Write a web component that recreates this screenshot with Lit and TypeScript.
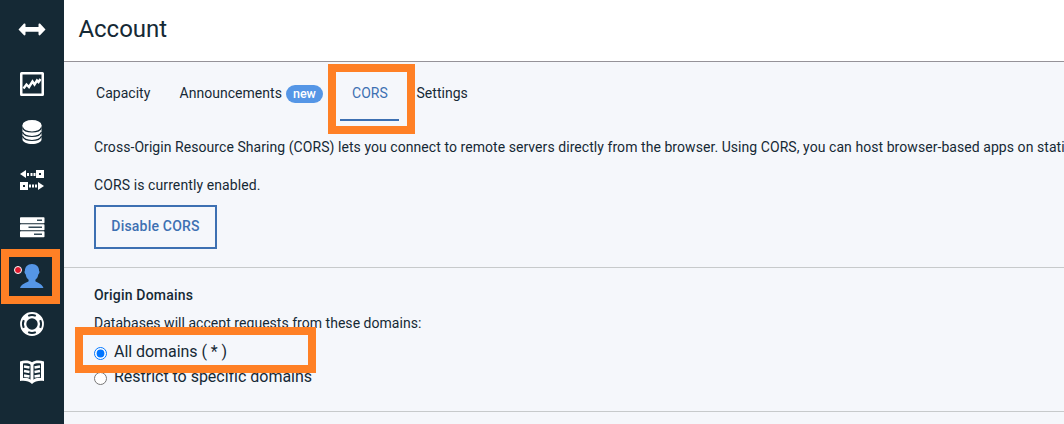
import { LitElement, html, css, svg } from "lit";
import { customElement } from "lit/decorators.js";

const socket = (x: number, y: number) => svg`<path fill-rule="evenodd" d="M${x} ${y}h8v8h-8zM${x + 3} ${y + 3}v2h2v-2z"/>`;
const icons = {
  arrows: svg`<path d="M-1.500 12.400l5.500-5.900q1.500-.5 1.500 1v2.500h13V7.500q0-1.500 1.500-1l5.500 5.900-5.500 5.900q-1.500.5-1.500-1v-2.500h-13v2.500q0 1.500-1.500 1z"/>`,
  chart: svg`<path fill-rule="evenodd" d="M1.500 0h21a1.500 1.500 0 0 1 1.500 1.500v21a1.500 1.500 0 0 1-1.500 1.500h-21A1.500 1.500 0 0 1 0 22.500v-21A1.500 1.500 0 0 1 1.500 0zM2.500 2.500v19h19v-19z"/><path d="M3.500 16.500l3-4 2.500 2.500 3.500-5.500 2 3 2.500-4 1.500 1.500 2-3" fill="none" stroke="#fff" stroke-width="2.400"/>`,
  database: svg`<path d="M2.500 5v14.500C2.500 22 7 24 12 24s9.500-2 9.500-4.500V5z"/><ellipse cx="12" cy="5" rx="9.500" ry="5"/><path d="M2.500 7.500c1 3 5 4.500 9.500 4.500s8.500-1.500 9.500-4.500M2.500 12c1 3 5 4.500 9.500 4.500s8.500-1.500 9.500-4.500M2.500 16c1 3 5 4.500 9.500 4.500s8.500-1.500 9.500-4.500" fill="none" stroke="#152935" stroke-width="1.200"/>`,
  replicate: svg`<path d="M0 6l6-4v8zM7 5h2v3H7zM10.500 5h2v3h-2zM13.500 5h2v3h-2zM24 18l-6-4v8zM9 16.500h2v3H9zM12 16.500h2v3h-2zM15 16.500h2v3h-2z"/>${socket(16, 2)}${socket(0, 14)}`,
  servers: svg`<g transform="translate(0 -.7)"><rect y="2" width="24.500" height="6" rx=".8"/><rect y="9" width="24.500" height="6" rx=".8"/><rect y="16" width="24.500" height="6" rx=".8"/><path d="M17 4.200h5v1.600h-5zM8.500 11.200H22v1.600H8.500zM14 18.200h8v1.600h-8z" fill="#344a57"/></g>`,
  user: svg`<path fill="#5596e6" d="M12 0C7.500 0 4.800 3 4.900 7c-.8.500-.4 2.500.8 3.500.4 2.600 1.400 4.200 2.900 5.300v1.500c-1.500 1.500-7.100 2-8.600 6.700h23.500c-1.500-4.700-6.600-5.200-8.100-6.700v-1.500c1.500-1.100 2.500-2.700 2.900-5.300 1.200-1 1.600-3 .8-3.500C19.200 3 16.500 0 12 0z"/>`,
  help: svg`<circle cx="12" cy="12" r="8.800" fill="none" stroke="#fff" stroke-width="6.200"/><g fill="none" stroke="#152935" stroke-width="2"><path d="M8.200 3.800a9 9 0 0 1 7.600 0M8.200 20.200a9 9 0 0 0 7.600 0M3.800 8.200a9 9 0 0 0 0 7.600M20.200 8.200a9 9 0 0 1 0 7.600"/></g>`,
  book: svg`<path d="M0 1.500C4 0 9 0 12 2.200 15 0 20 0 24 1.500V21c-4-.7-9-.4-12 3-3-3.400-8-3.700-12-3z"/><path fill="#152935" d="M3 3.500c3-.6 6-.3 7.500 1.200v15C8.500 18 6 17.600 3 18zM21 3.500c-3-.6-6-.3-7.500 1.200v15c2-1.700 4.500-2.100 7.500-1.700z"/><path fill="none" stroke="#fff" stroke-width="2.400" d="M4 6.500l5.500 1M4 11l5.500 1M4 15.500l5.500 1M20 6.500l-5.500 1M20 11l-5.500 1M20 15.500l-5.500 1"/>`,
};

@customElement("side-nav")
class SideNav extends LitElement {
  static styles = css`
    :host { display: flex; flex-direction: column; align-items: center; width: 64px; height: 424px; background: #152935; flex: none; box-sizing: border-box; padding-top: 17px; }
    .item { width: 64px; height: 24px; display: flex; justify-content: center; margin-bottom: 24px; flex: none; position: relative; }
    .first { margin-bottom: 31px; }
    svg { width: 24px; height: 24px; fill: #fff; display: block; overflow: visible; }
    .mark { position: absolute; left: 1px; top: -15px; width: 59px; height: 55px; box-sizing: border-box; border: 8px solid #ff8025; }
    .dot { position: absolute; left: 14px; top: 2px; width: 8px; height: 8px; box-sizing: border-box; border: 1px solid #fff; border-radius: 50%; background: #e0182d; }
  `;
  render() {
    return Object.entries(icons).map(([name, shape]) => html`
      <div class="item ${name === "arrows" ? "first" : ""}">
        <svg viewBox="0 0 24 24">${shape}</svg>
        ${name === "user" ? html`<i class="dot"></i><i class="mark"></i>` : ""}
      </div>`);
  }
}

@customElement("app-root")
class AppRoot extends LitElement {
  static styles = css`
    :host { display: flex; width: 1064px; height: 424px; overflow: hidden; background: #f5f7fb; color: #152935; font: 14px/20px Roboto, "Liberation Sans", sans-serif; }
    main { flex: 1; min-width: 0; overflow: hidden; }
    header { height: 62px; box-sizing: border-box; border-bottom: 1px solid #959298; background: #fff; padding: 13px 0 0 14.500px; }
    h1 { margin: 0; font-size: 24px; line-height: 32px; font-weight: 400; letter-spacing: -.05px; }
    .tabs { display: flex; height: 59px; padding-left: 32px; }
    .tab { display: flex; padding-top: 21px; box-sizing: border-box; white-space: nowrap; letter-spacing: .03px; }
    .capacity { width: 83.500px; }
    .news { width: 160.500px; }
    .cors { width: 59px; padding-left: 12px; color: #3d70b2; border-bottom: 2px solid #3d70b2; position: relative; }
    .settings { margin-left: 17.500px; }
    .badge { margin: 2px 0 0 4px; width: 37px; height: 18px; line-height: 17px; border-radius: 9px; background: #5596e6; color: #fff; font-size: 12.500px; font-weight: 500; text-align: center; }
    .mark { position: absolute; box-sizing: border-box; border: 8px solid #ff8025; }
    .markTab { left: -12px; top: 2px; width: 87px; height: 70px; }
    .status { height: 147px; box-sizing: border-box; padding: 16px 0 0 30px; border-bottom: 1px solid #c7cacb; }
    p { margin: 0; white-space: nowrap; }
    .intro { letter-spacing: .06px; margin-bottom: 18px; }
    .enabled { letter-spacing: .1px; }
    button { margin-top: 10px; width: 123px; height: 44px; padding: 0 0 2px; background: transparent; border: 2px solid #3d70b2; color: #3d70b2; font: 500 14px/20px Roboto, sans-serif; letter-spacing: .2px; display: block; }
    .origins { position: relative; height: 144px; box-sizing: border-box; padding: 17px 0 0 30px; border-bottom: 1px solid #c7cacb; }
    h2 { margin: 0 0 8px; font-size: 14px; line-height: 20px; font-weight: 500; letter-spacing: .2px; }
    .accept { letter-spacing: .03px; }
    label { display: flex; height: 25px; font-size: 16px; line-height: 24px; letter-spacing: -.02px; white-space: nowrap; }
    .all { margin-top: 7px; }
    .all span { letter-spacing: -.05px; }
    input { margin: 7px 7px 0 0; width: 13px; height: 13px; flex: none; }
    .markAll { left: 11px; top: 59px; width: 241px; height: 46px; }
  `;
  render() {
    return html`
      <side-nav></side-nav>
      <main>
        <header><h1>Account</h1></header>
        <nav class="tabs">
          <div class="tab capacity">Capacity</div>
          <div class="tab news"><span>Announcements</span><span class="badge">new</span></div>
          <div class="tab cors">CORS<i class="mark markTab"></i></div>
          <div class="tab settings">Settings</div>
        </nav>
        <section class="status">
          <p class="intro">Cross-Origin Resource Sharing (CORS) lets you connect to remote servers directly from the browser. Using CORS, you can host browser-based apps on stati</p>
          <p class="enabled">CORS is currently enabled.</p>
          <button>Disable CORS</button>
        </section>
        <section class="origins">
          <h2>Origin Domains</h2>
          <p class="accept">Databases will accept requests from these domains:</p>
          <label class="all"><input type="radio" name="origin" checked><span>All domains ( * )</span></label>
          <label><input type="radio" name="origin"><span>Restrict to specific domains</span></label>
          <i class="mark markAll"></i>
        </section>
      </main>`;
  }
}
